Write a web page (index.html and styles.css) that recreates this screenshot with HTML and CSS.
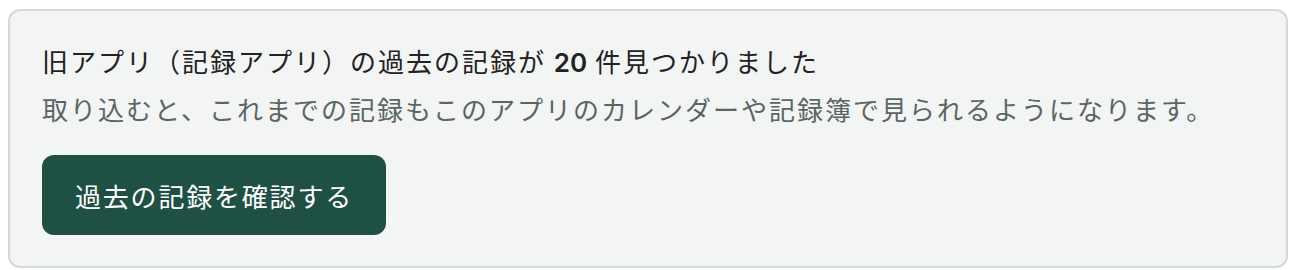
FILE: index.html
```html
<!DOCTYPE html>
<html lang="ja">
  <head>
    <meta charset="UTF-8" />
    <title>過去の記録の取り込み</title>
    <link rel="stylesheet" href="styles.css">
  </head>
  <body>
    <div class="import-card">
      <p class="import-title">旧アプリ（記録アプリ）の過去の記録が <strong>20</strong> 件見つかりました</p>
      <p class="import-desc">取り込むと、これまでの記録もこのアプリのカレンダーや記録簿で見られるようになります。</p>
      <button class="btn-primary" type="button">過去の記録を確認する</button>
    </div>
  </body>
</html>
```

FILE: styles.css
```css
body {
  margin: 0;
  padding: 9px 12px 0 8px;
  font-family: "Noto Sans CJK JP", "Noto Sans", sans-serif;
  background: #fff;
}

.import-card {
  background: #f3f5f4;
  border: 2px solid #d3dbd8;
  border-radius: 12px;
  padding: 32px 32px 31px;
  height: 259px;
  box-sizing: border-box;
}

.import-title {
  margin: 0;
  font-size: 26px;
  line-height: 36px;
  letter-spacing: 2px;
  color: #222;
}

.import-title strong {
  font-family: "Inter", sans-serif;
  font-weight: 600;
  letter-spacing: 0;
}

.import-desc {
  margin: 10px 0 0;
  font-size: 26px;
  line-height: 36px;
  letter-spacing: 2px;
  color: #5b6663;
}

.btn-primary {
  margin-top: 28px;
  height: 80px;
  padding: 0 33px;
  border: none;
  border-radius: 12px;
  background: #1f5044;
  color: #fff;
  font-family: inherit;
  font-size: 26px;
  letter-spacing: 1.8px;
  cursor: pointer;
}
```
